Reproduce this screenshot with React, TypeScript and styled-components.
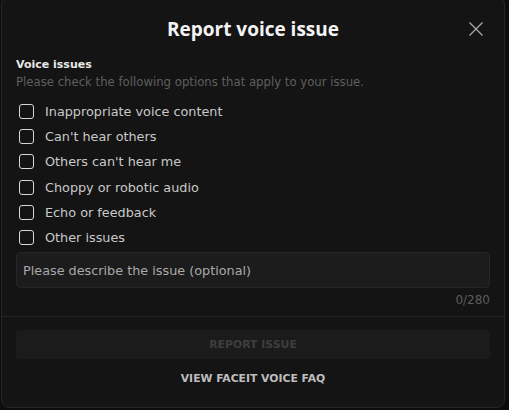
import React from "react";
import styled, { createGlobalStyle } from "styled-components";

const Global = createGlobalStyle`
  html, body { margin: 0; padding: 0; background: #0c0c0c; }
  body { font-family: "DejaVu Sans", "Liberation Sans", sans-serif; }
  * { box-sizing: border-box; }
`;

const Page = styled.div`
  width: 509px;
  height: 410px;
  padding: 0 4px 2px 1px;
  display: flex;
  flex-direction: column;
`;

const Modal = styled.div`
  flex: 1;
  margin-top: -4px;
  background: #141414;
  border: 1px solid #262626;
  border-radius: 8px;
  display: flex;
  flex-direction: column;
`;

const Header = styled.div`
  position: relative;
  height: 60px;
  padding-top: 4px;
  display: flex;
  align-items: center;
  justify-content: center;
`;

const Title = styled.h1`
  margin: 0;
  font-family: "Open Sans", "DejaVu Sans", sans-serif;
  font-size: 19px;
  font-weight: 700;
  color: #f4f4f4;
`;

const Close = styled.button`
  position: absolute;
  right: 21px;
  top: 25px;
  width: 14px;
  height: 14px;
  padding: 0;
  border: none;
  background: none;
  display: flex;
`;

const Body = styled.div`
  padding: 0 14px;
  display: flex;
  flex-direction: column;
`;

const SectionTitle = styled.div`
  font-size: 11px;
  font-weight: 700;
  color: #e8e8e8;
  line-height: 16px;
`;

const SectionHint = styled.div`
  font-size: 11.7px;
  color: #5f5f5f;
  line-height: 18px;
  margin-bottom: 8px;
`;

const Options = styled.div`
  display: flex;
  flex-direction: column;
`;

const Option = styled.label`
  height: 25.2px;
  display: flex;
  align-items: center;
  gap: 11px;
  padding-left: 3px;
  font-size: 12.8px;
  color: #c9c9c9;
`;

const Box = styled.span`
  width: 15px;
  height: 15px;
  border: 1.5px solid #d8d8d8;
  border-radius: 3px;
`;

const TextBox = styled.div`
  margin-top: 2px;
  height: 36px;
  background: #1c1c1c;
  border: 1px solid #262626;
  border-radius: 4px;
  display: flex;
  align-items: center;
  padding: 0 6px;
  font-size: 12.8px;
  color: #a9a9a9;
`;

const Counter = styled.div`
  text-align: right;
  font-size: 12px;
  color: #5c5c5c;
  line-height: 24px;
`;

const Divider = styled.div`
  height: 1px;
  background: #252525;
  margin-top: 4px;
`;

const Footer = styled.div`
  padding: 13px 14px 0;
  display: flex;
  flex-direction: column;
  align-items: center;
`;

const Button = styled.button`
  width: 100%;
  height: 29px;
  border: none;
  border-radius: 4px;
  background: #1b1b1b;
  color: #3e3e3e;
  font-family: inherit;
  font-size: 10.9px;
  font-weight: 700;
  text-transform: uppercase;
`;

const Link = styled.a`
  margin-top: 13px;
  font-size: 10.8px;
  font-weight: 700;
  color: #bdbdbd;
  text-transform: uppercase;
`;

const options = [
  "Inappropriate voice content",
  "Can't hear others",
  "Others can't hear me",
  "Choppy or robotic audio",
  "Echo or feedback",
  "Other issues",
];

export default function App() {
  return (
    <>
      <Global />
      <Page>
        <Modal>
          <Header>
            <Title>Report voice issue</Title>
            <Close aria-label="Close">
              <svg width="14" height="14" viewBox="0 0 14 14">
                <path d="M0.5 0.5L13.5 13.5M13.5 0.5L0.5 13.5" stroke="#a8a8a8" strokeWidth="1.3" />
              </svg>
            </Close>
          </Header>
          <Body>
            <SectionTitle>Voice issues</SectionTitle>
            <SectionHint>Please check the following options that apply to your issue.</SectionHint>
            <Options>
              {options.map((o) => (
                <Option key={o}>
                  <Box />
                  {o}
                </Option>
              ))}
            </Options>
            <TextBox>Please describe the issue (optional)</TextBox>
            <Counter>0/280</Counter>
          </Body>
          <Divider />
          <Footer>
            <Button disabled>Report issue</Button>
            <Link>View FACEIT voice FAQ</Link>
          </Footer>
        </Modal>
      </Page>
    </>
  );
}
